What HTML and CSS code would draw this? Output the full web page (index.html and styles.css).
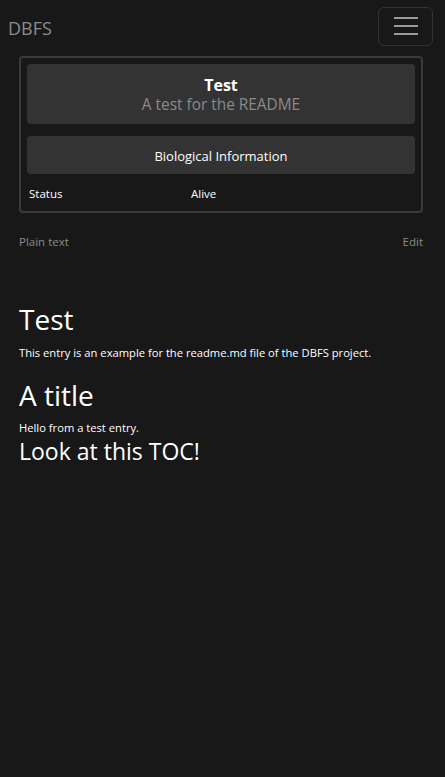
FILE: index.html
```html
<!DOCTYPE html>
<html lang="en">
<head>
<meta charset="utf-8">
<title>DBFS</title>
<link rel="stylesheet" href="styles.css">
</head>
<body>
<nav class="navbar">
  <span class="brand">DBFS</span>
  <button class="toggler" aria-label="Toggle navigation">
    <svg width="24" height="18" viewBox="0 0 24 18"><path d="M0 1h24M0 9h24M0 17h24" stroke="#9a9a9a" stroke-width="2"/></svg>
  </button>
</nav>
<main class="container">
  <section class="card">
    <div class="card-head">
      <div class="title">Test</div>
      <div class="subtitle">A test for the README</div>
    </div>
    <div class="section-head">Biological Information</div>
    <div class="info-row">
      <span>Status</span>
      <span>Alive</span>
    </div>
  </section>
  <div class="meta">
    <span>Plain text</span>
    <span>Edit</span>
  </div>
  <article class="content">
    <h1>Test</h1>
    <p>This entry is an example for the readme.md file of the DBFS project.</p>
    <h1>A title</h1>
    <p class="tight">Hello from a test entry.</p>
    <h2>Look at this TOC!</h2>
  </article>
</main>
</body>
</html>
```
FILE: styles.css
```css
html, body {
  margin: 0;
  background: #181818;
  color: #fff;
  font-family: "Open Sans", "Noto Sans", sans-serif;
}
.navbar {
  display: flex;
  justify-content: space-between;
  align-items: center;
  padding: 6px 12px 0 8px;
  height: 40px;
}
.brand {
  font-size: 18px;
  color: #8c8c8c;
  margin-top: 4px;
}
.toggler {
  width: 55px;
  height: 39px;
  background: transparent;
  border: 1px solid #333;
  border-radius: 6px;
  display: flex;
  align-items: center;
  justify-content: center;
  padding: 0;
}
.container {
  padding: 10px 22px 0 19px;
}
.card {
  border: 2px solid #3a3a3a;
  border-radius: 4px;
  padding: 6px 6px 0 6px;
  height: 147px;
}
.card-head {
  background: #333;
  border-radius: 4px;
  height: 60px;
  display: flex;
  flex-direction: column;
  align-items: center;
  justify-content: center;
  padding-top: 2px;
  box-sizing: border-box;
}
.title {
  font-weight: 700;
  font-size: 16px;
  line-height: 20px;
}
.subtitle {
  color: #8a8a8a;
  font-size: 15.4px;
  line-height: 20px;
}
.section-head {
  margin-top: 12px;
  background: #333;
  border-radius: 4px;
  height: 38px;
  display: flex;
  align-items: center;
  justify-content: center;
  font-size: 13px;
  padding-top: 1px;
  box-sizing: border-box;
}
.info-row {
  display: grid;
  grid-template-columns: 162px 1fr;
  padding: 12px 2px 0;
  font-size: 11.5px;
}
.meta {
  display: flex;
  justify-content: space-between;
  margin-top: 21px;
  font-size: 11.5px;
  color: #8a8a8a;
}
.content {
  padding-top: 53px;
}
.content h1 {
  font-size: 28px;
  font-weight: 400;
  margin: 0;
  line-height: 34px;
}
.content h2 {
  font-size: 23px;
  font-weight: 400;
  margin: 0;
  line-height: normal;
}
.content p {
  font-size: 11.2px;
  margin: 9px 0 18px;
}
.content p.tight {
  margin: 8px 0 0;
}
```
